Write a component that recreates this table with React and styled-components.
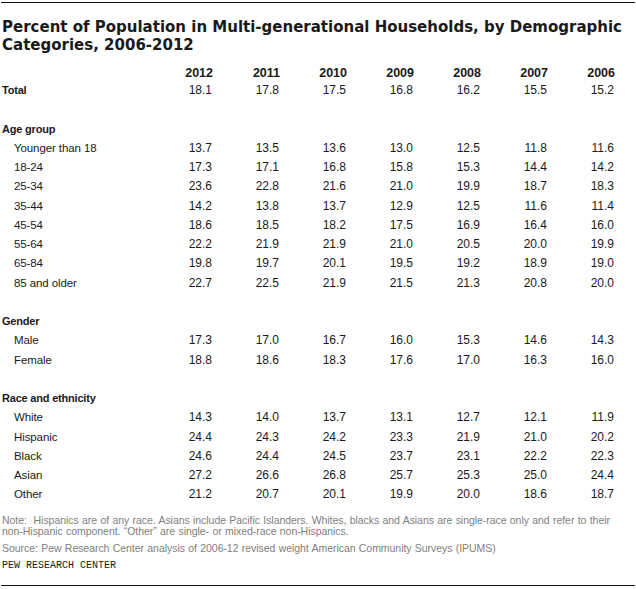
import React from 'react';
import styled, { createGlobalStyle } from 'styled-components';

const GlobalStyle = createGlobalStyle`
  body {
    margin: 0;
    background: #fff;
    font-family: "Liberation Sans", Arial, sans-serif;
  }
`;

const Frame = styled.div`
  margin: 2px 1px 0;
  width: 634px;
  border-top: 1px solid #111;
  border-bottom: 1px solid #111;
  padding-left: 1px;
  box-sizing: border-box;
  padding-bottom: 13px;
`;

const Title = styled.h1`
  margin: 15px 0 0;
  font-family: "DejaVu Sans", "Liberation Sans", sans-serif;
  font-size: 15px;
  line-height: 18px;
  font-weight: bold;
  color: #1a1a1a;
  letter-spacing: 0;
`;

const Table = styled.div`
  margin-top: 12px;
  display: grid;
  grid-template-columns: 144px repeat(7, 67px);
`;

const Cell = styled.div`
  height: ${(p) => (p.$head ? '15px' : '19.25px')};
  line-height: ${(p) => (p.$head ? '15px' : '19.25px')};
  font-size: ${(p) => (p.$head ? '12.5px' : '12px')};
  font-weight: ${(p) => (p.$head ? 'bold' : 'normal')};
  color: #1a1a1a;
  text-align: right;
  padding-right: ${(p) => (p.$head ? '0' : '1px')};
  white-space: nowrap;
`;

const Label = styled.div`
  height: 19.25px;
  line-height: 19.25px;
  font-size: ${(p) => (p.$bold ? '11px' : '11.5px')};
  font-weight: ${(p) => (p.$bold ? 'bold' : 'normal')};
  letter-spacing: ${(p) => (p.$bold ? '-0.2px' : '-0.1px')};
  padding-left: ${(p) => (p.$indent ? '12px' : '0')};
  color: #1a1a1a;
  white-space: nowrap;
`;

const SectionRow = styled.div`
  grid-column: 1 / -1;
  height: 19.25px;
  line-height: 19.25px;
  font-size: 11px;
  font-weight: bold;
  letter-spacing: -0.2px;
  color: #1a1a1a;
`;

const Spacer = styled.div`
  grid-column: 1 / -1;
  height: 19.25px;
`;

const Note = styled.p`
  margin: ${(p) => p.$top || '0'} 0 0;
  font-size: 10.5px;
  line-height: 11px;
  color: #808080;
  letter-spacing: -0.05px;
  word-spacing: 0.5px;
  white-space: nowrap;
`;

const Credit = styled.div`
  margin-top: 6px;
  font-family: "Liberation Mono", "DejaVu Sans Mono", monospace;
  font-size: 10px;
  line-height: 12px;
  color: #1a1a1a;
`;

const years = ['2012', '2011', '2010', '2009', '2008', '2007', '2006'];

const sections = [
  {
    title: 'Age group',
    rows: [
      ['Younger than 18', '13.7', '13.5', '13.6', '13.0', '12.5', '11.8', '11.6'],
      ['18-24', '17.3', '17.1', '16.8', '15.8', '15.3', '14.4', '14.2'],
      ['25-34', '23.6', '22.8', '21.6', '21.0', '19.9', '18.7', '18.3'],
      ['35-44', '14.2', '13.8', '13.7', '12.9', '12.5', '11.6', '11.4'],
      ['45-54', '18.6', '18.5', '18.2', '17.5', '16.9', '16.4', '16.0'],
      ['55-64', '22.2', '21.9', '21.9', '21.0', '20.5', '20.0', '19.9'],
      ['65-84', '19.8', '19.7', '20.1', '19.5', '19.2', '18.9', '19.0'],
      ['85 and older', '22.7', '22.5', '21.9', '21.5', '21.3', '20.8', '20.0'],
    ],
  },
  {
    title: 'Gender',
    rows: [
      ['Male', '17.3', '17.0', '16.7', '16.0', '15.3', '14.6', '14.3'],
      ['Female', '18.8', '18.6', '18.3', '17.6', '17.0', '16.3', '16.0'],
    ],
  },
  {
    title: 'Race and ethnicity',
    rows: [
      ['White', '14.3', '14.0', '13.7', '13.1', '12.7', '12.1', '11.9'],
      ['Hispanic', '24.4', '24.3', '24.2', '23.3', '21.9', '21.0', '20.2'],
      ['Black', '24.6', '24.4', '24.5', '23.7', '23.1', '22.2', '22.3'],
      ['Asian', '27.2', '26.6', '26.8', '25.7', '25.3', '25.0', '24.4'],
      ['Other', '21.2', '20.7', '20.1', '19.9', '20.0', '18.6', '18.7'],
    ],
  },
];

const total = ['18.1', '17.8', '17.5', '16.8', '16.2', '15.5', '15.2'];

const App = () => {
  return (
    <>
      <GlobalStyle />
      <Frame>
        <Title>
          Percent of Population in Multi-generational Households, by Demographic
          <br />
          Categories, 2006-2012
        </Title>
        <Table>
          <Cell $head />
          {years.map((y) => (
            <Cell $head key={y}>{y}</Cell>
          ))}
          <Label $bold>Total</Label>
          {total.map((v, i) => (
            <Cell key={i}>{v}</Cell>
          ))}
          {sections.map((s) => (
            <React.Fragment key={s.title}>
              <Spacer />
              <SectionRow>{s.title}</SectionRow>
              {s.rows.map((r) => (
                <React.Fragment key={r[0]}>
                  <Label $indent>{r[0]}</Label>
                  {r.slice(1).map((v, i) => (
                    <Cell key={i}>{v}</Cell>
                  ))}
                </React.Fragment>
              ))}
            </React.Fragment>
          ))}
        </Table>
        <Note $top="10px">
          Note:&nbsp; Hispanics are of any race. Asians include Pacific Islanders. Whites, blacks and Asians are single-race only and refer to their
          <br />
          non-Hispanic component. “Other” are single- or mixed-race non-Hispanics.
        </Note>
        <Note $top="6px">
          Source: Pew Research Center analysis of 2006-12 revised weight American Community Surveys (IPUMS)
        </Note>
        <Credit>PEW RESEARCH CENTER</Credit>
      </Frame>
    </>
  );
};

export default App;
